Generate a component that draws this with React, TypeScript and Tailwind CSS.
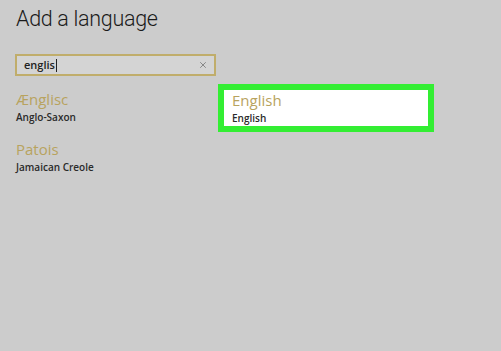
import { X } from 'lucide-react'

const font = { fontFamily: '"Open Sans", "Noto Sans", sans-serif' }
const titleFont = { fontFamily: 'Roboto, "Open Sans", sans-serif' }

function Item({ name, sub }: { name: string; sub: string }) {
  return (
    <div className="leading-none">
      <div className="text-[15px] text-[#b8a35e]">{name}</div>
      <div className="mt-[5px] text-[10px] font-semibold text-[#2a2a2a]">{sub}</div>
    </div>
  )
}

export default function App() {
  return (
    <div className="w-[501px] h-[351px] bg-[#cccccc] overflow-hidden pl-[15px] pt-[8px]" style={font}>
      <h1 className="text-[21.5px] font-light leading-none text-[#1a1a1a] pl-px tracking-[-0.3px]" style={titleFont}>
        Add a language
      </h1>

      {/* Search box */}
      <div className="mt-[24.5px] w-[201px] h-[22px] border-2 border-[#c0ad6b] bg-[#d4d4d4] flex items-center justify-between pl-[7px] pr-[6px]">
        <span className="text-[11px] font-semibold text-[#222] flex items-center">
          englis<span className="w-px h-[13px] bg-[#222] ml-px" />
        </span>
        <X className="w-[10px] h-[10px] text-[#777]" strokeWidth={2} />
      </div>

      {/* Results */}
      <div className="mt-[8px] grid grid-cols-[203px_216px] items-start">
        <div className="flex flex-col gap-[20px] pt-[8px] pl-px">
          <Item name="Ænglisc" sub="Anglo-Saxon" />
          <Item name="Patois" sub="Jamaican Creole" />
        </div>
        <div className="h-[48px] border-[6px] border-[#33ee33] bg-white pl-[8px] pt-[3px]">
          <Item name="English" sub="English" />
        </div>
      </div>
    </div>
  )
}
